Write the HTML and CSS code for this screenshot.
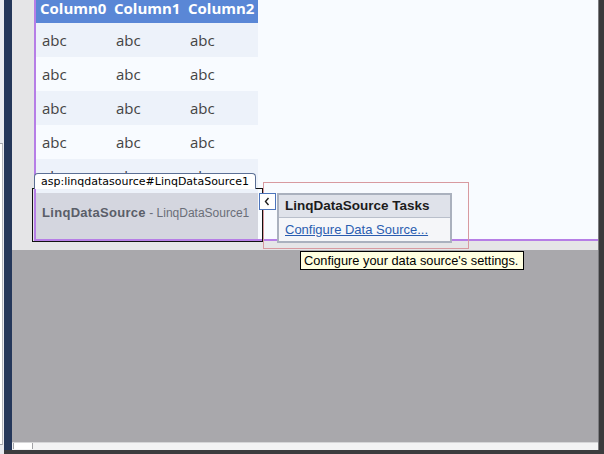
FILE: index.html
```html
<!DOCTYPE html>
<html lang="en">

<head>
    <meta charset="UTF-8">
    <meta name="viewport" content="width=device-width, initial-scale=1.0">
    <title>LinqDataSource Designer</title>
    <link rel="stylesheet" href="styles.css">
</head>

<body>
    <div class="edge-left">
        <div class="edge-box"></div>
    </div>

    <div class="window">
        <div class="window-main">
            <div class="rail"></div>

            <div class="workspace">
                <div class="design">
                    <div class="page">
                        <table class="grid">
                            <tr>
                                <th>Column0</th>
                                <th>Column1</th>
                                <th>Column2</th>
                            </tr>
                            <tr class="alt">
                                <td>abc</td>
                                <td>abc</td>
                                <td>abc</td>
                            </tr>
                            <tr>
                                <td>abc</td>
                                <td>abc</td>
                                <td>abc</td>
                            </tr>
                            <tr class="alt">
                                <td>abc</td>
                                <td>abc</td>
                                <td>abc</td>
                            </tr>
                            <tr>
                                <td>abc</td>
                                <td>abc</td>
                                <td>abc</td>
                            </tr>
                            <tr class="alt">
                                <td>abc</td>
                                <td>abc</td>
                                <td>abc</td>
                            </tr>
                        </table>

                        <div class="control">
                            <span class="control-type">LinqDataSource</span> - LinqDataSource1

                            <!-- selection chrome drawn over the control -->
                            <div class="outline"></div>
                            <div class="tag">asp:linqdatasource#LinqDataSource1</div>
                            <div class="focus-rect"></div>
                            <button class="smart-btn">
                                <svg width="15" height="15" viewBox="0 0 15 15">
                                    <polyline points="8.5,4 5.5,7.5 8.5,11" fill="none" stroke="#1e1e1e" stroke-width="1.4" />
                                </svg>
                            </button>
                            <div class="tasks">
                                <div class="tasks-head">LinqDataSource Tasks</div>
                                <div class="tasks-body">
                                    <a href="#" class="tasks-link">Configure Data Source...</a>
                                </div>
                            </div>
                            <div class="tooltip">Configure your data source's settings.</div>
                        </div>
                    </div>
                </div>

                <div class="backdrop"></div>

                <div class="status">
                    <div class="status-tab"></div>
                </div>
            </div>

            <div class="edge-right"></div>
        </div>
        <div class="window-bottom"></div>
    </div>
</body>

</html>
```

FILE: styles.css
```css
body {
    margin: 0;
    width: 604px;
    height: 454px;
    display: flex;
    overflow: hidden;
    font-family: "Liberation Sans", Arial, sans-serif;
    background-color: #f2f3f6;
}

.edge-left {
    width: 4px;
    background: #e9ebf0;
    position: relative;
}

.edge-box {
    margin-top: 143px;
    height: 302px;
    width: 3px;
    background: #fff;
    border-top: 1px solid #a0a4ac;
    border-right: 1px solid #b4b7bd;
    border-bottom: 1px solid #a0a4ac;
    box-sizing: border-box;
}

.window {
    flex: 1;
    display: flex;
    flex-direction: column;
}

.window-main {
    height: 450px;
    display: flex;
}

.window-bottom {
    flex: 1;
    background: #3c3c3e;
}

.rail {
    width: 8px;
    background: #24375a;
}

.workspace {
    flex: 1;
    display: flex;
    flex-direction: column;
}

.design {
    background: #e5e5e7;
    padding-left: 22px;
    padding-bottom: 9px;
}

.page {
    background: #f8fbff;
    border-left: 2px solid #b67ee6;
    border-bottom: 2px solid #b67ee6;
}

/* Grid */
.grid {
    width: 222px;
    border-collapse: collapse;
    table-layout: fixed;
    font-family: "Open Sans", sans-serif;
    font-size: 15px;
}

.grid th {
    height: 23px;
    padding: 0 0 0 4px;
    background: #5a87d6;
    color: #fff;
    font-weight: bold;
    text-align: left;
    vertical-align: top;
    line-height: 16px;
}

.grid td {
    height: 34px;
    padding: 0 0 0 6px;
    color: #444;
    line-height: 34px;
}

.grid .alt td {
    background: #edf2fa;
}

/* LinqDataSource control */
.control {
    position: relative;
    width: 222px;
    height: 46px;
    box-sizing: border-box;
    padding: 12px 0 0 6px;
    background: #d4d6df;
    color: #6a6e78;
    font-size: 12px;
    line-height: 16px;
    white-space: nowrap;
}

.control-type {
    font-weight: bold;
    font-size: 13px;
    letter-spacing: 0.3px;
    color: #5a5e69;
}

.outline {
    position: absolute;
    left: -4px;
    top: -5px;
    width: 231px;
    height: 54px;
    box-sizing: border-box;
    border: 1px solid #111;
}

.tag {
    position: absolute;
    left: -2px;
    top: -20px;
    width: 222px;
    height: 16px;
    box-sizing: border-box;
    padding-left: 6px;
    background: #fff;
    border: 1px solid #5b6f95;
    border-bottom: none;
    border-radius: 4px 4px 0 0;
    color: #000;
    font-family: "DejaVu Sans", sans-serif;
    font-size: 11px;
    line-height: 15px;
    white-space: nowrap;
}

.focus-rect {
    position: absolute;
    left: 227px;
    top: -11px;
    width: 206px;
    height: 67px;
    box-sizing: border-box;
    border: 1px solid #d89aa0;
}

.smart-btn {
    position: absolute;
    left: 223px;
    top: 0;
    width: 17px;
    height: 17px;
    padding: 0;
    box-sizing: border-box;
    border: 1px solid #4c74bb;
    background: #fff;
}

.smart-btn svg {
    display: block;
}

.tasks {
    position: absolute;
    left: 241px;
    top: 0;
    width: 175px;
    height: 50px;
    box-sizing: border-box;
    border: 2px solid #aab1be;
    background: #f5f6f9;
}

.tasks-head {
    height: 22px;
    padding-left: 6px;
    background: #dfe2ea;
    border-bottom: 1px solid #b9bfcb;
    color: #1c1c1c;
    font-weight: bold;
    font-size: 13.5px;
    line-height: 21px;
    white-space: nowrap;
}

.tasks-body {
    padding: 4px 0 0 6px;
    line-height: 16px;
}

.tasks-link {
    color: #2a5db0;
    font-size: 13px;
    white-space: nowrap;
}

.tooltip {
    position: absolute;
    left: 264px;
    top: 58px;
    width: 224px;
    height: 19px;
    box-sizing: border-box;
    padding-left: 3px;
    background: #ffffe1;
    border: 1px solid #000;
    color: #000;
    font-size: 12.8px;
    line-height: 17px;
    white-space: nowrap;
}

/* Lower area */
.backdrop {
    flex: 1;
    background: #a9a8ac;
}

.status {
    height: 7px;
    background: #f3f3f4;
    border-top: 1px solid #d6d6d8;
}

.status-tab {
    width: 18px;
    height: 6px;
    margin-left: 1px;
    border-left: 1px solid #a2a2a6;
    border-right: 1px solid #a2a2a6;
    background: #fff;
}

.edge-right {
    width: 5px;
    background: #3a3a3c;
    border-left: 1px solid #7c7c80;
}
```
